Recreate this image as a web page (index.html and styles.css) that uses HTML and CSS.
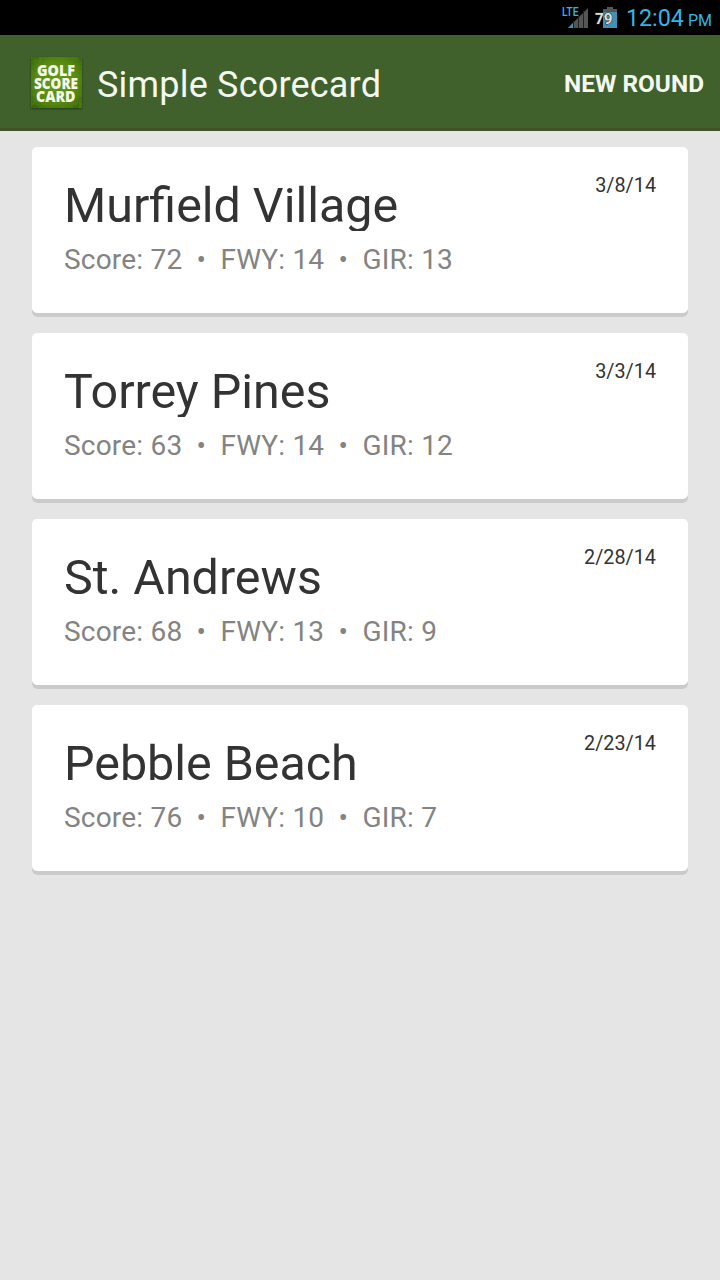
FILE: index.html
```html
<!DOCTYPE html>
<html lang="en">
<head>
    <meta charset="UTF-8">
    <meta name="viewport" content="width=device-width, initial-scale=1.0">
    <title>Simple Scorecard</title>
    <link rel="stylesheet" href="styles.css">
</head>
<body>
    <div class="status-bar">
        <svg class="signal" width="28" height="24" viewBox="0 0 28 24">
            <path d="M6 23L26 3V23Z" fill="#555"/>
            <path d="M6 23L11 18V23Z" fill="#3592b5"/>
            <path d="M11.5 16V23M16.5 11V23M21.5 6V23" stroke="#222" stroke-width="1"/>
            <text x="0" y="11" textLength="16.5" lengthAdjust="spacingAndGlyphs">LTE</text>
        </svg>
        <svg class="battery" width="24" height="24" viewBox="0 0 24 24">
            <path d="M12 2H18V4H22V7H8V4H12Z" fill="#555"/>
            <path d="M8 7H22V23H8Z" fill="#3e93b3"/>
            <text x="0" y="19" textLength="17.5" lengthAdjust="spacingAndGlyphs">79</text>
        </svg>
        <span class="time">12:04</span>
        <span class="ampm">PM</span>
    </div>

    <header class="action-bar">
        <svg class="logo" width="51" height="51" viewBox="0 0 51 51">
            <defs>
                <radialGradient id="grass" cx="50%" cy="48%" r="65%">
                    <stop offset="0" stop-color="#6a9c1a"/>
                    <stop offset="0.6" stop-color="#5a8d16"/>
                    <stop offset="1" stop-color="#38660f"/>
                </radialGradient>
                <filter id="blades" x="0" y="0" width="100%" height="100%">
                    <feTurbulence type="fractalNoise" baseFrequency="0.35" numOctaves="2" seed="4"/>
                    <feColorMatrix values="0 0 0 0 0.1  0 0 0 0 0.25  0 0 0 0 0  1.6 0 0 0 -0.6"/>
                </filter>
            </defs>
            <rect width="51" height="51" fill="url(#grass)"/>
            <rect width="51" height="51" filter="url(#blades)"/>
            <text x="6" y="19" textLength="38" lengthAdjust="spacingAndGlyphs">GOLF</text>
            <text x="3" y="32" textLength="44" lengthAdjust="spacingAndGlyphs">SCORE</text>
            <text x="5" y="45" textLength="39.5" lengthAdjust="spacingAndGlyphs">CARD</text>
        </svg>
        <h1>Simple Scorecard</h1>
        <button type="button">NEW ROUND</button>
    </header>

    <main class="rounds">
        <div class="card">
            <div class="info">
                <h2>Murfield Village</h2>
                <p>Score: 72  •  FWY: 14  •  GIR: 13</p>
            </div>
            <span class="date">3/8/14</span>
        </div>
        <div class="card">
            <div class="info">
                <h2>Torrey Pines</h2>
                <p>Score: 63  •  FWY: 14  •  GIR: 12</p>
            </div>
            <span class="date">3/3/14</span>
        </div>
        <div class="card">
            <div class="info">
                <h2>St. Andrews</h2>
                <p>Score: 68  •  FWY: 13  •  GIR: 9</p>
            </div>
            <span class="date">2/28/14</span>
        </div>
        <div class="card">
            <div class="info">
                <h2>Pebble Beach</h2>
                <p>Score: 76  •  FWY: 10  •  GIR: 7</p>
            </div>
            <span class="date">2/23/14</span>
        </div>
    </main>
</body>
</html>
```
FILE: styles.css
```css
* {
    margin: 0;
    padding: 0;
    box-sizing: border-box;
}

body {
    min-height: 100vh;
    font-family: Roboto, sans-serif;
    background-color: #e5e5e5;
}

.status-bar {
    display: flex;
    align-items: flex-start;
    justify-content: flex-end;
    height: 35px;
    padding: 5px 8px 0 0;
    background: #000;
    color: #33b5e5;
}

.signal {
    margin-right: 5px;
}

.signal text {
    font-size: 12px;
    font-weight: 500;
    fill: #33b5e5;
}

.battery {
    margin-right: 7px;
}

.battery text {
    font-size: 15px;
    font-weight: bold;
    fill: #ddd;
    stroke: #222;
    stroke-width: 1px;
    paint-order: stroke;
}

.time {
    font-size: 23.3px;
    line-height: 26px;
}

.ampm {
    margin-left: 4px;
    font-size: 16px;
    line-height: 31px;
}

.action-bar {
    display: flex;
    align-items: center;
    height: 96px;
    padding: 2px 16px 0 31px;
    background: #40612b;
    border-bottom: 3px solid #40522a;
    color: #f3f7f0;
}

.logo {
    margin-right: 15px;
    box-shadow: 0 1px 2px rgba(0, 0, 0, 0.4);
}

.logo text {
    font-family: "Open Sans", sans-serif;
    font-size: 15.5px;
    font-weight: 800;
    fill: #f6faee;
}

.action-bar h1 {
    flex: 1;
    font-size: 36px;
    font-weight: normal;
    line-height: 44px;
    letter-spacing: 0.2px;
    padding-top: 5px;
}

.action-bar button {
    background: none;
    border: none;
    color: inherit;
    font-family: inherit;
    font-size: 24.4px;
    font-weight: bold;
    line-height: 28px;
    padding-top: 3px;
    cursor: pointer;
}

.rounds {
    display: flex;
    flex-direction: column;
    gap: 16px;
    padding: 16px 32px;
}

.card {
    display: flex;
    justify-content: space-between;
    align-items: flex-start;
    height: 170px;
    padding: 26px 32px 0 32px;
    background: #fff;
    border-radius: 5px;
    box-shadow: inset 0 -4px 0 #cbcbcb;
}

.info {
    padding-top: 8px;
}

.card h2 {
    height: 50px;
    overflow: hidden;
    font-size: 48.4px;
    font-weight: normal;
    line-height: 50px;
    color: #333;
}

.card p {
    margin-top: 12px;
    font-size: 28px;
    line-height: 34px;
    letter-spacing: 0.2px;
    color: #838383;
    white-space: pre;
}

.date {
    font-size: 19.8px;
    line-height: 26px;
    color: #333;
}
```
